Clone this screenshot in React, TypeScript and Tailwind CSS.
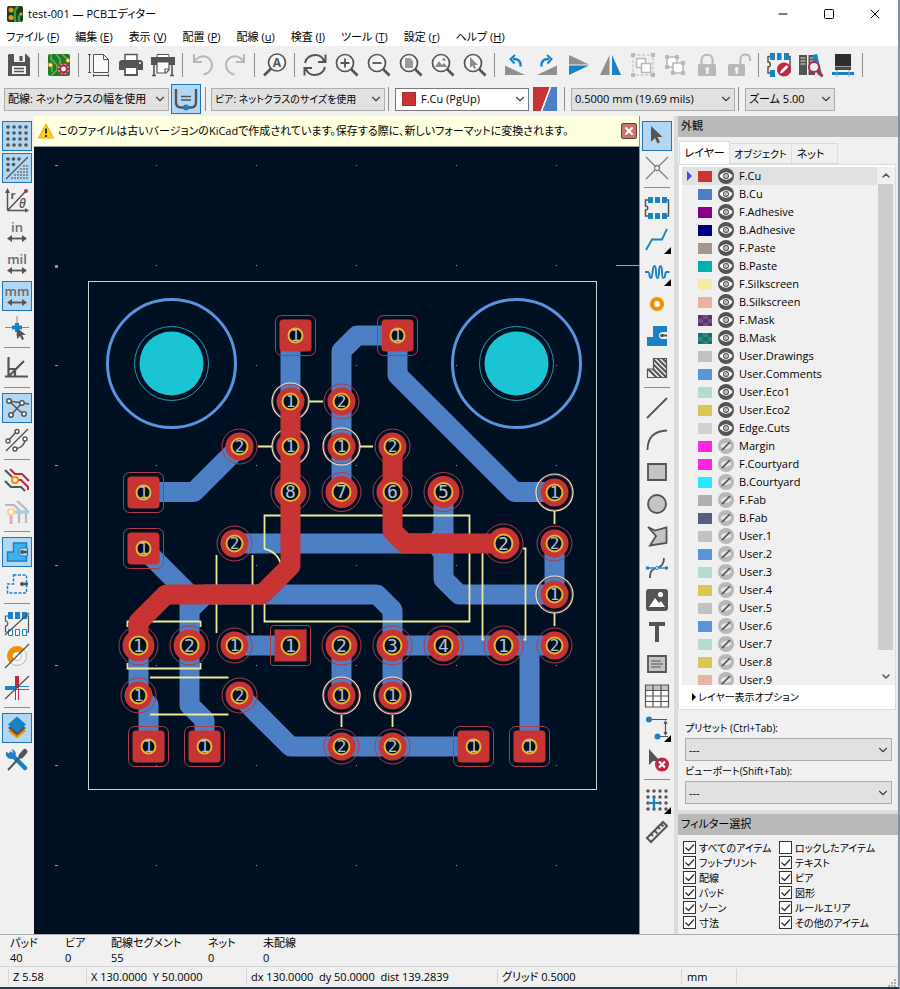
import { useState } from 'react'
import type { ReactNode } from 'react'
import { ChevronDown, ChevronUp, Minus, Square, X } from 'lucide-react'
import clsx from 'clsx'

const D = '#545454'
const B = '#1a81c4'
const R = '#bf2641'
const O = '#f29100'
const G = '#b8b8b8'

const dots = (xs: number[], ys: number[], r: number, fill: string) =>
    xs.flatMap((x) => ys.map((y) => <circle key={`${x}-${y}`} cx={x} cy={y} r={r} fill={fill} />))

const lens = (
    <>
        <circle cx="10" cy="10" r="8.5" fill="#f6f6f6" stroke={D} strokeWidth="1.7" />
        <path d="M16 16l6.5 6.5" stroke={D} strokeWidth="2.6" />
    </>
)

const arrowCursor = 'M7 3v16l4-4 2.500 5.500 2.500-1.200-2.500-5.300h5z'

// all the glyphs are drawn on a 24x24 grid
const icons: Record<string, ReactNode> = {
    save: (
        <>
            <path d="M2 1h17l4 4v18H1V2z" fill={D} />
            <path d="M7 1h11v8H7zM5 13h14v8H5z" fill="#f0f0f0" />
            <path d="M12.500 3h3v5h-3z" fill={D} />
            <path d="M7 15.500h10M7 18.500h10" stroke={D} strokeWidth="1.5" />
        </>
    ),
    board: (
        <>
            <rect x="1" y="1" width="22" height="22" rx="2" fill="#1d7a35" />
            <path d="M4 1v5l6 6v5l-6 6M9 1l4 5v6M15 1l6 6M1 10l4 4v5" stroke="#6cb52d" strokeWidth="1.6" fill="none" />
            <circle cx="3.500" cy="12" r="2" fill="#fff3c4" stroke={O} />
            <circle cx="21" cy="7.500" r="1.800" fill="#fff3c4" stroke={O} />
            <circle cx="16.500" cy="16" r="5" fill={R} stroke="#f8e9ec" strokeWidth="1" />
            <path d="M16.500 9.500v13M10 16h13M12 11.500l9 9M21 11.500l-9 9" stroke={R} strokeWidth="2.200" />
            <circle cx="16.500" cy="16" r="2.400" fill="#f5f5f5" />
        </>
    ),
    page: (
        <>
            <path d="M6.500 1.500h10l5 5v13h-15z" fill="#fafafa" stroke={D} />
            <path d="M16.500 1.500v5h5M2.500 1v19M1 1.500h3M1 19.500h3M6.500 21v3M21.500 21v3M6.500 22.500h15" fill="none" stroke={D} />
        </>
    ),
    print: (
        <>
            <path d="M6 8V1.500h12V8" fill="#fff" stroke={D} strokeWidth="1.4" />
            <path d="M2 7h20l2 2v8h-5v-4H5v4H0V9z" fill={D} />
            <path d="M6 14h12v8H6z" fill="#fff" stroke={D} strokeWidth="1.8" />
            <circle cx="21" cy="10" r="1" fill="#fff" />
        </>
    ),
    plot: (
        <>
            <path d="M6 5V1.500h12V5" fill="#fff" stroke={D} />
            <path d="M0 4h24v8H0z" fill={D} />
            <path d="M3 12v10M21 12v10M1 22.500h4M19 22.500h4" stroke={D} strokeWidth="1.600" />
            <path d="M6 9h12v8l-3 3H6z" fill="#fff" stroke={D} strokeWidth="1.200" />
            <path d="M14 20v-4h4" fill="none" stroke={D} strokeWidth="1.200" />
        </>
    ),
    undo: <path d="M3 1v8h8M3.500 8.500C7 3 14 1.500 18.500 6c5 5 2 14-6 15.500" fill="none" stroke={G} strokeWidth="2" />,
    redo: <path d="M21 1v8h-8M20.500 8.500C17 3 10 1.500 5.500 6c-5 5-2 14 6 15.500" fill="none" stroke={G} strokeWidth="2" />,
    find: (
        <>
            <circle cx="14" cy="9.500" r="8.500" fill="#f6f6f6" stroke={D} strokeWidth="1.7" />
            <path d="M8 15.500L1 22.500" stroke={D} strokeWidth="2.600" />
            <text x="14" y="14" fontSize="12" fontWeight="700" textAnchor="middle" fill={D}>A</text>
        </>
    ),
    refresh: (
        <path
            d="M2 10C3 4.500 8 2 12.500 2c4 0 7 2 8.500 6M22.500 1.500V9H15M22 14c-1 5.500-6 8-10.500 8-4 0-7-2-8.500-6M1.500 22.500V15H9"
            fill="none" stroke={D} strokeWidth="2"
        />
    ),
    zoomIn: <>{lens}<path d="M5.500 10h9M10 5.500v9" stroke={D} strokeWidth="1.800" /></>,
    zoomOut: <>{lens}<path d="M5.500 10h9" stroke={D} strokeWidth="1.800" /></>,
    zoomPage: <>{lens}<path d="M6 5h5l3 3v7H6z" fill="#9a9a9a" /></>,
    zoomObj: <>{lens}<path d="M4 14l4-6 3 4 2-2 3.500 4z" fill="#8a8a8a" /><circle cx="13" cy="6.500" r="1.500" fill="#8a8a8a" /></>,
    zoomSel: <>{lens}<path d="M7 4v11l2.500-2.500 1.500 3.500 2-1-1.500-3h3.500z" fill="#8a8a8a" /></>,
    rotL: (
        <>
            <path d="M2 12.500L22 22H2z" fill="#8f8f8f" />
            <path d="M17.500 13.500c.5-5-2.500-8-7.500-7.500" fill="none" stroke={B} strokeWidth="2.400" />
            <path d="M12 2L7.500 6l4 4.500" fill="none" stroke={B} strokeWidth="2" />
        </>
    ),
    rotR: (
        <>
            <path d="M22 12.500L2 22h20z" fill="#8f8f8f" />
            <path d="M6.500 13.500c-.5-5 2.500-8 7.500-7.500" fill="none" stroke={B} strokeWidth="2.400" />
            <path d="M12 2l4.500 4-4 4.500" fill="none" stroke={B} strokeWidth="2" />
        </>
    ),
    flipV: <><path d="M2 2l20 9.500H2z" fill="#8f8f8f" /><path d="M2 22l20-9.500H2z" fill={B} /></>,
    flipH: <><path d="M10.500 2v20H1z" fill="#8f8f8f" /><path d="M13 2v20h9z" fill={B} /></>,
    group: (
        <g stroke={G} fill="none">
            <path d="M2 2h20v20H2z" strokeDasharray="3 1.500" />
            <path d="M5.500 5.500h9v9h-9z" fill="#fff" strokeWidth="1.500" />
            <path d="M10.500 10.500h9v9h-9z" fill="#fff" strokeWidth="1.500" />
            <path d="M0 0h4v4H0zM20 0h4v4h-4zM0 20h4v4H0zM20 20h4v4h-4z" fill={G} stroke="none" />
        </g>
    ),
    ungroup: (
        <g stroke={G} fill="none">
            <path d="M4 4h10v10H4z" fill="#fff" strokeWidth="1.500" />
            <path d="M10 10h10v10H10z" fill="#fff" strokeWidth="1.500" />
            <path d="M2 2h4v4H2zM12 2h4v4h-4zM2 12h4v4H2zM8 18h4v4H8zM18 18h4v4h-4zM18 8h4v4h-4z" fill={G} stroke="none" />
        </g>
    ),
    lock: (
        <>
            <path d="M6.500 11V7c0-7 11-7 11 0v4" fill="none" stroke={G} strokeWidth="2.200" />
            <rect x="3" y="11" width="18" height="12" rx="1.500" fill={G} />
            <path d="M11 16h2.500v5H11z" fill="#f0f0f0" /><circle cx="12.200" cy="16" r="2" fill="#f0f0f0" />
        </>
    ),
    unlock: (
        <>
            <path d="M13.500 11V6c0-6 9.500-6 9.500 0v2" fill="none" stroke={G} strokeWidth="2" />
            <rect x="1" y="11" width="17" height="12" rx="1.500" fill={G} />
            <path d="M8.500 16H11v5H8.500z" fill="#f0f0f0" /><circle cx="9.700" cy="16" r="2" fill="#f0f0f0" />
        </>
    ),
    fpEdit: (
        <>
            <path d="M4 3.500H1V9c3 0 3 5 0 5v6h3M20 3.500h3V20" fill="none" stroke={D} strokeWidth="1.500" />
            <path d="M3 0h5v7H3zM10 0h4.500v7H10zM17 0h5v7h-5zM3 17h5v7H3z" fill={B} />
            <circle cx="17" cy="16.500" r="7" fill={R} />
            <path d="M13 20.500l1-3 5.500-5.500 2 2-5.500 5.500z" fill="#fff" />
        </>
    ),
    fpBrowse: (
        <>
            <path d="M0 2h8v20H0zM9.500 2H16v20H9.500z" fill={D} />
            <path d="M1.500 5h5M1.500 8h5M1.500 11h5M11 5h3.500M11 8h3.500" stroke="#ddd" strokeWidth="1.200" />
            <path d="M13 2l5-1 5 20-4 1z" fill={B} />
            <circle cx="15" cy="14" r="5" fill="#dfeefa" stroke={R} strokeWidth="2" />
            <path d="M18.500 18l5 5.500" stroke={R} strokeWidth="3" />
        </>
    ),
    view3d: (
        <>
            <path d="M4 1h16v12H4z" fill="#2d2d2d" />
            <path d="M4 13.500h16v3.500H4z" fill="#4a4a4a" />
            <path d="M1 19h22v3H1z" fill={B} />
            <path d="M6 17v7M18 17v7" stroke="#9ab" />
        </>
    ),
    grid: <>{dots([3, 9, 15, 21], [3, 9, 15, 21], 1.8, D)}</>,
    gridFine: (
        <>
            {dots([3, 8.5, 14], [3], 1.8, D)}{dots([3, 8.5], [8.5], 1.8, D)}{dots([3], [14], 1.8, D)}
            {[18, 15, 12, 9, 6].map((n, i) => (
                <path key={n} d={`M${n} ${10 + i * 3}H23`} stroke="#7d8b98" strokeWidth="2" strokeDasharray="2 1" />
            ))}
            <path d="M1 23L23 1" stroke={D} strokeWidth="1.300" />
        </>
    ),
    polar: (
        <>
            <path d="M2.500 22.500V2M2.500 22.500H23M3 22L20 4" fill="none" stroke={D} strokeWidth="1.500" />
            <path d="M0 5l2.500-5L5 5zM20 20l4 2.500-4 2z" fill={D} />
            <circle cx="21" cy="3" r="2" fill={R} />
            <text x="5.500" y="11" fontSize="11" fontWeight="700" fill={D}>r</text>
            <text x="14" y="20" fontSize="12" fontWeight="600" fontStyle="italic" fill={D}>θ</text>
        </>
    ),
    anchor: (
        <>
            <path d="M0 11.500h24M12 0v20" stroke="#888" />
            <path d="M7 11.500h10M12 7v9" stroke={B} strokeWidth="4" />
            <path d="M12 12v11l3-3 2 4 2-1-2-4h4z" fill={D} />
        </>
    ),
    angle: <path d="M3.500 1v20M0 20.500h23M3.500 20.500L19 5M3.500 13h6.500v7" fill="none" stroke={D} strokeWidth="2.200" />,
    ratsnest: (
        <g stroke={D} fill="#fff" strokeWidth="1.500">
            <path d="M4 5l14 13M17 7L6 19M4 5l20 3" fill="none" />
            <circle cx="4" cy="5" r="2.200" /><circle cx="17" cy="7" r="2.200" /><circle cx="6" cy="19" r="2.200" /><circle cx="19" cy="18" r="2.200" />
        </g>
    ),
    ratsCurve: (
        <g stroke={D} fill="#fff" strokeWidth="1.400">
            <path d="M1 23L23 1M3 13L12 3M10 21c6-1 10-4 10-10" fill="none" />
            <circle cx="3" cy="13" r="2" /><circle cx="12" cy="3.500" r="2" /><circle cx="10" cy="21" r="2" /><circle cx="20" cy="11" r="2" />
        </g>
    ),
    highlight: (
        <g fill="none" strokeWidth="2">
            <path d="M0 2l7 7M0 13l6 6h10l4 4" stroke={D} />
            <path d="M5 1l5 5h7l7 7M13 12h3l7 7v3" stroke={R} />
            <circle cx="10" cy="12" r="3" fill="#fff" stroke={O} />
        </g>
    ),
    dimmed: (
        <g fill="none" strokeWidth="2.200">
            <path d="M0 5h9l5 5v13M12 1l9 8v14" stroke={G} />
            <path d="M9 12h15" stroke="#a5cdea" strokeWidth="3.500" />
            <path d="M6 15v9" stroke="#e6a8b2" strokeWidth="3" />
            <circle cx="6" cy="12" r="3" fill="#fff" stroke="#f8d49b" />
        </g>
    ),
    zoneFill: (
        <>
            <path d="M8.500 3h13v18h-19v-9h6z" fill="#41b1ec" stroke={B} strokeWidth="1.500" />
            <path d="M22.500 8h-5a4 4 0 0 0 0 8h5z" fill="#b3d7f3" stroke={B} />
            <path d="M17 12h6" stroke={D} strokeWidth="2.500" /><circle cx="17" cy="12" r="2" fill={D} />
        </>
    ),
    zoneLine: (
        <>
            <path d="M8.500 3h13v18h-19v-9h6z" fill="none" stroke={B} strokeWidth="1.500" strokeDasharray="3 1.500" />
            <path d="M17 12h6" stroke={D} strokeWidth="2.500" /><circle cx="17" cy="12" r="2" fill={D} />
        </>
    ),
    padSketch: (
        <>
            <path d="M3 4H.5v5c3 0 3 5 0 5v6H3M21 4h2.500v16H21" fill="none" stroke={D} strokeWidth="1.200" />
            <path d="M3 0h5v7H3zM10 0h5v7h-5zM17 0h5v7h-5z" fill={B} />
            <path d="M3.500 17.500h4v6h-4zM10.500 17.500h4v6h-4zM17.500 17.500h4v6h-4z" fill="#fff" stroke={B} />
            <path d="M0 23L24 1" stroke={D} strokeWidth="1.300" />
        </>
    ),
    viaSketch: (
        <>
            <circle cx="12" cy="12" r="9.500" fill="#f4f4f4" stroke={G} /><circle cx="12" cy="12" r="4.500" fill="#fff" stroke={G} />
            <path d="M5 19A9.800 9.800 0 0 1 19 5l-4 4a4 4 0 0 0-6 6z" fill={O} />
            <path d="M0 24L24 0" stroke={D} strokeWidth="1.300" />
        </>
    ),
    trackSketch: (
        <>
            <path d="M0 12h12" stroke={B} strokeWidth="4" /><path d="M12 10.500h12M12 13.500h12" stroke={B} />
            <path d="M12 0v12" stroke={R} strokeWidth="4" /><path d="M10.500 12v12M13.500 12v12" stroke={R} />
            <path d="M0 23L24 0" stroke={D} strokeWidth="1.300" />
        </>
    ),
    layers: (
        <>
            <path d="M3 15l9 7.500 9-7.500-9-7z" fill={O} /><path d="M3 12l9 7.500 9-7.500-9-7z" fill={D} /><path d="M3 8.500l9 8 9-8-9-8z" fill={B} />
        </>
    ),
    tools: (
        <>
            <path d="M6 6l14 14" stroke={B} strokeWidth="4.500" strokeLinecap="round" />
            <path d="M1.500 3.500a5 5 0 1 0 5-2.500l2 3.500-3 2.500z" fill={B} />
            <path d="M15 9L3 22" stroke={D} strokeWidth="2" /><path d="M16 8l4-4.500" stroke={D} strokeWidth="5" strokeLinecap="round" />
        </>
    ),
    select: <path d={arrowCursor} fill={D} transform="translate(-1 -1)" />,
    localRats: (
        <g stroke="#808080" strokeWidth="1.300" fill="#fff">
            <path d="M1 1l22 22M23 1L1 23" /><circle cx="12" cy="12" r="2.500" />
        </g>
    ),
    footprint: (
        <>
            <path d="M3 4H.5v6c3 0 3 4 0 4v6H3M21 4h2.500v16H21" fill="none" stroke={D} strokeWidth="1.500" />
            <path d="M3 1h5v6H3zM10 1h5v6h-5zM17 1h5v6h-5zM3 17h5v6H3zM10 17h5v6h-5zM17 17h5v6h-5z" fill={B} />
        </>
    ),
    route: <path d="M1 22l6-10.500h10L22 1" fill="none" stroke={B} strokeWidth="1.800" />,
    tune: <path d="M0 12h3c2 0 1 6 3 6s1-12 3.500-12 .5 12 3 12 .5-12 3-12 .5 12 3 12 1-6 3-6h3" fill="none" stroke={B} strokeWidth="2" />,
    via: <circle cx="12" cy="12" r="5" fill="#fff" stroke={O} strokeWidth="4.200" />,
    zone: (
        <>
            <path d="M8 2h14v20H2v-9h6z" fill={B} />
            <path d="M22 8h-4a4 3.500 0 0 0 0 7h4" fill="#f0f0f0" /><path d="M17 11.500h5" stroke={D} strokeWidth="2" /><circle cx="17" cy="11.500" r="1.800" fill={D} />
        </>
    ),
    keepout: (
        <>
            <clipPath id="hatch"><path d="M8 2h14v20H2v-9h6z" /></clipPath>
            <path clipPath="url(#hatch)" d="M-8 2l20 20M-3 2l20 20M2 2l20 20M7 2l20 20M12 2l20 20M17 2l10 10" stroke={D} strokeWidth="2" />
            <path d="M8.500 2.500h13v19h-19V13h6z" fill="none" stroke={D} strokeWidth="1.200" />
        </>
    ),
    line: <path d="M2 22L22 2" stroke={D} strokeWidth="1.800" />,
    arc: <path d="M2.500 22C2.500 10 9 3 22 2.500" fill="none" stroke={D} strokeWidth="1.800" />,
    rect: <path d="M3 4h18v16H3z" fill="#c4c4c4" stroke={D} strokeWidth="1.800" />,
    circle: <circle cx="12" cy="12" r="9" fill="#c4c4c4" stroke={D} strokeWidth="1.800" />,
    poly: <path d="M3 3l7 3.500 11.500-3V19L5 21.500 11 12z" fill="#c4c4c4" stroke={D} strokeWidth="1.800" />,
    bezier: (
        <>
            <path d="M5 22c0-8 3-9 7-10s7-3 7-10" fill="none" stroke={D} strokeWidth="1.800" />
            <path d="M2 12h20" stroke={B} strokeWidth="1.400" /><path d="M1 10.500h3v3H1zM20 10.500h3v3h-3z" fill={B} />
            <circle cx="12" cy="12" r="1.500" fill="#fff" stroke={B} />
        </>
    ),
    image: (
        <>
            <rect x="1" y="1" width="22" height="22" rx="3" fill={D} /><path d="M4 19l6-9 4 5 2-2 4 6z" fill="#fff" /><circle cx="15.500" cy="6.500" r="2.600" fill="#fff" />
        </>
    ),
    text: <path d="M4 4h16M12 4v18" stroke={D} strokeWidth="4" />,
    textbox: <><path d="M3 4h18v16H3z" fill="#c4c4c4" stroke={D} strokeWidth="1.800" /><path d="M6 9h10M6 12h12M6 15h10" stroke={D} /></>,
    table: (
        <>
            <path d="M.5 1h23v22H.5z" fill="#fff" /><path d="M.5 1h23v5H.5z" fill="#c4c4c4" />
            <path d="M.5 1h23v22H.5zM.5 6.500h23M.5 12h23M.5 17.500h23M8 1v22M16 1v22" fill="none" stroke={D} strokeWidth="1.200" />
        </>
    ),
    dimension: (
        <>
            <path d="M4 3.500h18M12 20.500h11M20.500 5v14" stroke={D} strokeWidth="1.200" />
            <path d="M18.500 8l2-4 2 4zM18.500 16l2 4 2-4z" fill={D} /><circle cx="4" cy="3.500" r="3" fill={B} /><circle cx="12.500" cy="20.500" r="3" fill={B} />
        </>
    ),
    remove: (
        <>
            <path d="M4 1v16l4-4h7z" fill={D} /><circle cx="17" cy="16.500" r="7" fill={R} />
            <path d="M14 13.500l6 6M20 13.500l-6 6" stroke="#fff" strokeWidth="2.200" />
        </>
    ),
    gridOrigin: <>{dots([3, 9, 15, 21], [3, 9, 15, 21], 1.7, D)}<path d="M3 15h12M9 9v12" stroke={B} strokeWidth="2.200" /></>,
    ruler: (
        <path d="M2 18L18 2l4 4L6 22zM6 14l2 2M9.500 10.500l3 3M13 7l2 2M16 4l2.500 2.500" fill="none" stroke={D} strokeWidth="2" />
    ),
    autoWidth: (
        <>
            <path d="M2 2v13c0 4 2 5.500 5 5.500h10c3 0 5-1.500 5-5.500V2" fill="none" stroke={D} strokeWidth="2.400" />
            <path d="M7 9.500h10M7 13h10" stroke={D} strokeWidth="1.400" /><circle cx="12" cy="20.500" r="3" fill={B} />
        </>
    ),
    layerPair: (
        <>
            <path d="M0 0h17L8 24H0z" fill="#c83434" /><path d="M18 0h6v24H9z" fill="#4d7fc4" /><path d="M17.500 0L8.500 24" stroke="#fff" strokeWidth="1.500" />
        </>
    ),
}

// unit buttons carry a caption above a double arrow
for (const unit of ['in', 'mil', 'mm']) {
    icons[unit] = (
        <>
            <text x="12" y="12" fontSize="13" textAnchor="middle" fontWeight="600" fill="#6a6a6a">{unit}</text>
            <path d="M4 18.500h16" stroke={D} strokeWidth="1.800" />
            <path d="M7 15l-5 3.500L7 22zM17 15l5 3.500-5 3.500z" fill={D} />
        </>
    )
}

function Icon({ name }: { name: string }) {
    return <svg viewBox="0 0 24 24" className="size-6 overflow-visible">{icons[name]}</svg>
}

function ToolButton({ name, active, more }: { name: string; active?: boolean; more?: boolean }) {
    return (
        <button
            type="button"
            aria-label={name}
            className={clsx(
                'm-px grid size-[30px] shrink-0 place-items-center border',
                active ? 'border-[#1f75bb] bg-[#b3d7f3]' : 'border-transparent'
            )}
        >
            <span className="col-start-1 row-start-1"><Icon name={name} /></span>
            {more && (
                <svg viewBox="0 0 7 7" className="col-start-1 row-start-1 size-[7px] self-end justify-self-end"><path d="M7 0v7H0z" /></svg>
            )}
        </button>
    )
}

function VSep() {
    return <span className="mx-[3px] h-6 w-px shrink-0 border-l border-[#8c8c8c] box-content" />
}

function HSep() {
    return <span className="my-[3px] h-px w-[26px] shrink-0 border-t border-[#8c8c8c] box-content" />
}

function Combo({ label, value, className, white, swatch }: { label: string; value: string; className?: string; white?: boolean; swatch?: boolean }) {
    return (
        <div
            className={clsx(
                'grid h-[23px] shrink-0 items-center border',
                white ? 'border-[#7a7a7a] bg-white' : 'border-[#adadad] bg-[#e1e1e1]',
                className
            )}
        >
            <select
                aria-label={label}
                className={clsx('col-start-1 row-start-1 h-full w-full appearance-none bg-transparent', swatch ? 'pl-[25px]' : 'pl-[3px]')}
            >
                <option>{value}</option>
            </select>
            {swatch && <span className="pointer-events-none col-start-1 row-start-1 ml-[6px] size-[14px] border border-[#b02c2c] bg-[#c83434]" />}
            <ChevronDown className="pointer-events-none col-start-1 row-start-1 mr-px size-[14px] justify-self-end text-[#444]" strokeWidth={2} />
        </div>
    )
}

const menus = [
    ['ファイル', 'F'], ['編集', 'E'], ['表示', 'V'], ['配置', 'P'], ['配線', 'u'], ['検査', 'I'], ['ツール', 'T'], ['設定', 'r'], ['ヘルプ', 'H'],
]

const topTools = [
    'save', '|', 'board', '|', 'page', 'print', 'plot', '|', 'undo', 'redo', '|', 'find', '|',
    'refresh', 'zoomIn', 'zoomOut', 'zoomPage', 'zoomObj', 'zoomSel', '|',
    'rotL', 'rotR', 'flipV', 'flipH', 'group', 'ungroup', 'lock', 'unlock', '|', 'fpEdit', 'fpBrowse', 'view3d', '|',
]

const leftTools = [
    'grid', 'gridFine', 'polar', 'in', 'mil', 'mm', 'anchor', '|', 'angle', '|', 'ratsnest', 'ratsCurve', '|',
    'highlight', 'dimmed', '|', 'zoneFill', 'zoneLine', '|', 'padSketch', 'viaSketch', 'trackSketch', '|', 'layers', 'tools',
]

const rightTools = [
    'select', 'localRats', '|', 'footprint', 'route', 'tune', 'via', 'zone', 'keepout', '|',
    'line', 'arc', 'rect', 'circle', 'poly', 'bezier', 'image', 'text', 'textbox', 'table', 'dimension', 'remove', '|', 'gridOrigin', 'ruler',
]

const activeTools = ['grid', 'gridFine', 'mm', 'ratsnest', 'zoneFill', 'layers', 'select']
const moreTools = ['route', 'tune', 'dimension', 'gridOrigin']

function SideBar({ tools, label }: { tools: string[]; label: string }) {
    return (
        <div role="toolbar" aria-label={label} className="flex w-[34px] shrink-0 flex-col items-center pt-1">
            {tools.map((t, i) =>
                t === '|' ? <HSep key={i} /> : <ToolButton key={i} name={t} active={activeTools.includes(t)} more={moreTools.includes(t)} />
            )}
        </div>
    )
}

const layers: [string, string, boolean][] = [
    ['F.Cu', '#c83434', true], ['B.Cu', '#4d7fc4', true], ['F.Adhesive', '#840084', true], ['B.Adhesive', '#000084', true],
    ['F.Paste', '#a5958e', true], ['B.Paste', '#00b0ac', true], ['F.Silkscreen', '#f2eda1', true], ['B.Silkscreen', '#e8b2a7', true],
    ['F.Mask', '#5e3070', true], ['B.Mask', '#0f7468', true], ['User.Drawings', '#c2c2c2', true], ['User.Comments', '#5994dc', true],
    ['User.Eco1', '#b4dbd2', true], ['User.Eco2', '#d8c852', true], ['Edge.Cuts', '#d0d2cd', true], ['Margin', '#ff26e2', false],
    ['F.Courtyard', '#ff26e2', false], ['B.Courtyard', '#26e9ff', false], ['F.Fab', '#afafaf', false], ['B.Fab', '#585d84', false],
    ['User.1', '#c2c2c2', false], ['User.2', '#5994dc', false], ['User.3', '#b4dbd2', false], ['User.4', '#d8c852', false],
    ['User.5', '#c2c2c2', false], ['User.6', '#5994dc', false], ['User.7', '#b4dbd2', false], ['User.8', '#d8c852', false], ['User.9', '#e8b2a7', false],
]

function Eye({ on }: { on: boolean }) {
    return on ? (
        <svg viewBox="0 0 16 16" className="size-4">
            <circle cx="8" cy="8" r="8" fill="#545454" />
            <path d="M1.500 8C5 3 11 3 14.500 8 11 13 5 13 1.500 8z" fill="#fff" />
            <circle cx="8" cy="8" r="3" fill="#545454" /><circle cx="8" cy="8" r="1.800" fill="#fff" /><circle cx="8" cy="8" r=".8" fill="#545454" />
        </svg>
    ) : (
        <svg viewBox="0 0 16 16" className="size-4">
            <circle cx="8" cy="8" r="8" fill="#b8b8b8" />
            <path d="M2.500 8C5 4 11 4 13.500 8 11 12 5 12 2.500 8z" fill="#e4e4e4" />
            <path d="M4 12l8-8" stroke="#4a4a4a" strokeWidth="1.600" />
        </svg>
    )
}

function LayerRow({ name, color, on, current }: { name: string; color: string; on: boolean; current: boolean }) {
    return (
        <li className={clsx('flex h-[18px] items-center leading-3', current && 'bg-[#e1e1e1]')}>
            <span className="w-4 shrink-0 pl-[5px]">
                {current && <svg viewBox="0 0 5 10" className="h-[10px] w-[5px]"><path d="M0 0l5 5-5 5z" fill="#4444e8" /></svg>}
            </span>
            <svg viewBox="0 0 14 11" className="h-[11px] w-[14px] shrink-0">
                <path d="M0 0h14v11H0z" fill={color} />
                {name.endsWith('Mask') && <path d="M5 0h5v4H5zM0 4h5v4H0zM10 4h4v4h-4zM5 8h5v3H5z" fill="#fff" opacity=".15" />}
            </svg>
            <button type="button" aria-label={`${name} visibility`} className="ml-[6px] shrink-0"><Eye on={on} /></button>
            <span className="ml-[5px]">{name}</span>
        </li>
    )
}

const filters: [string, boolean][] = [
    ['すべてのアイテム', true], ['ロックしたアイテム', false], ['フットプリント', true], ['テキスト', true], ['配線', true], ['ビア', true],
    ['パッド', true], ['図形', true], ['ゾーン', true], ['ルールエリア', true], ['寸法', true], ['その他のアイテム', true],
]

function FilterBox({ label, on }: { label: string; on: boolean }) {
    const [checked, setChecked] = useState(on)
    return (
        <label className="flex h-[15px] items-center gap-[3px] whitespace-nowrap">
            <span className="grid">
                <input
                    type="checkbox"
                    checked={checked}
                    onChange={() => setChecked(!checked)}
                    className="col-start-1 row-start-1 size-[13px] appearance-none border border-[#333] bg-white"
                />
                {checked && (
                    <svg viewBox="0 0 13 13" className="pointer-events-none col-start-1 row-start-1 size-[13px]">
                        <path d="M2.500 6.500l3 3 5.500-6" fill="none" stroke="#333" strokeWidth="1.300" />
                    </svg>
                )}
            </span>
            {label}
        </label>
    )
}

const backTracks = [
    'M290.500 340V401.500',
    'M397.500 335.500H357L341.500 351V492',
    'M397.500 335.500V375L514.500 492H554.500',
    'M143.500 492H194L239.500 446.500',
    'M234.500 543.500H443.500M436 543.500l7.500-10M436 543.500l7.500 10',
    'M443.500 492V579L459 594.500H554.500V543.500',
    'M143.500 548.500L189.500 594.500V705L204.500 720V746.500',
    'M189.500 610L205 594.500H377L392.500 610V695.500',
    'M138.500 645.500V695.500L148.500 705V746.500',
    'M234.500 645.500H290.500',
    'M392.500 645.500H554.500M529.500 645.500V746.500',
    'M341.500 645.500V695.500',
    'M239.500 695.500L290.500 746.500H473.500',
]

const frontTracks = [
    'M290.500 401.500V566L262 594.500H166L138.500 622V645.500',
    'M392.500 446.500V531L405 543.500H503.500',
]

const silk = [
    'M309 401.500H323M258 446.500H272M360 446.500H373M554.500 511V524M554.500 613V626M341.500 715V727M392.500 715V727',
    'M264.500 549V515.500H469.500V621.500H264.500V588.500M264.500 549A20 20 0 0 1 264.500 588.500',
    'M216.500 555V633M252.500 555V633',
    'M127.500 627V621.500H200.500V627M127.500 663V668.500H200.500V663',
    'M150 677.500H228.500M150 714.500H228.500',
    'M482.500 550V639.500h2M523 548.500h2.500V639.500h-2',
]

type Pad = [number, number, string]

const boxPads: Pad[] = [
    [295.5, 335.5, '1'], [397.5, 335.5, '1'], [143.5, 492.5, '1'], [143.5, 548.5, '1'],
    [148.5, 746.5, '1'], [204.5, 746.5, '1'], [473.5, 746.5, '1'], [529.5, 746.5, '1'],
]
const bigPads: Pad[] = [
    [290.5, 492, '8'], [341.5, 492, '7'], [392.5, 492, '6'], [443.5, 492, '5'], [341.5, 645.5, '2'], [392.5, 645.5, '3'],
    [443.5, 645.5, '4'], [503.5, 645.5, '1'], [503.5, 543.5, '2'], [138.5, 645.5, '1'], [189.5, 645.5, '2'],
]
const smallPads: Pad[] = [
    [239.5, 446.5, '2'], [234.5, 543.5, '2'], [234.5, 645.5, '1'], [138.5, 695.5, '1'], [239.5, 695.5, '2'], [341.5, 401.5, '2'],
    [392.5, 446.5, '2'], [554.5, 543.5, '2'], [554.5, 645.5, '2'], [341.5, 746.5, '2'], [392.5, 746.5, '2'],
]
const ringPads: Pad[] = [
    [290.5, 401.5, '1'], [290.5, 446.5, '1'], [341.5, 446.5, '1'], [554.5, 492.5, '1'], [554.5, 594.5, '1'], [341.5, 695.5, '1'], [392.5, 695.5, '1'],
]

function Hole({ pad: [x, y, n], r, size }: { pad: Pad; r: number; size: number }) {
    return (
        <>
            <circle cx={x} cy={y} r={r} fill="#001023" stroke="#e3b72e" strokeWidth="2" />
            <text x={x} y={y + size * 0.36} fontSize={size} textAnchor="middle" fill="#b9c1cf" className="font-['DejaVu_Sans_Mono',monospace]">{n}</text>
        </>
    )
}

function Board() {
    const cols = [56, 156, 256, 356, 456, 556]
    const rows = [165, 265, 365, 465, 565, 665, 765, 865]
    return (
        <svg viewBox="34 147 605 787" preserveAspectRatio="xMidYMid slice" className="h-full w-full" role="img" aria-label="PCB">
            {rows.map((y) => cols.map((x) => (
                <rect key={`${x}-${y}`} x={x === 56 ? 55 : x} y={y} width={x === 56 ? 3 : 1} height={x === 56 && y === 265 ? 3 : 1} fill="#8a93a0" />
            )))}
            <path d="M616 265.500H639" stroke="#9aa2ac" />
            <rect x="88.500" y="281.500" width="508" height="508" fill="none" stroke="#d0d2cd" />
            {[171.5, 516.5].map((x) => (
                <g key={x}>
                    <circle cx={x} cy="363.500" r="64" fill="none" stroke="#5994dc" strokeWidth="3" />
                    <circle cx={x} cy="363.500" r="37" fill="none" stroke="#18a0ae" strokeWidth="1" />
                    <circle cx={x} cy="363.500" r="32" fill="#1bc4d4" />
                </g>
            ))}
            <g fill="none" stroke="#4d7fc4" strokeWidth="20" strokeLinejoin="round">{backTracks.map((d) => <path key={d} d={d} />)}</g>
            <g fill="none" stroke="#eeea9c" strokeWidth="1.800">{silk.map((d) => <path key={d} d={d} />)}</g>
            <g fill="none" stroke="#b03a48" strokeWidth="1">
                {boxPads.map(([x, y]) => <rect key={`${x}-${y}`} x={x - 20} y={y - 20} width="40" height="40" rx="6" />)}
                {bigPads.map(([x, y]) => <circle key={`${x}-${y}`} cx={x} cy={y} r="19.500" />)}
                {smallPads.map(([x, y]) => <circle key={`${x}-${y}`} cx={x} cy={y} r="17.500" />)}
                {ringPads.map(([x, y]) => <circle key={`${x}-${y}`} cx={x} cy={y} r="17.500" />)}
                <rect x="270.500" y="625.500" width="40" height="40" rx="3" />
            </g>
            <g fill="none" stroke="#f5e6c4" strokeWidth="1.200">
                {ringPads.map(([x, y]) => <circle key={`${x}-${y}`} cx={x} cy={y} r="18.500" />)}
            </g>
            <g fill="none" stroke="#c83434" strokeWidth="20" strokeLinejoin="round">{frontTracks.map((d) => <path key={d} d={d} />)}</g>
            <g fill="#c83434">
                {boxPads.map(([x, y]) => <rect key={`${x}-${y}`} x={x - 16} y={y - 16} width="32" height="32" rx="4" />)}
                {bigPads.map(([x, y]) => <circle key={`${x}-${y}`} cx={x} cy={y} r="16" />)}
                {smallPads.map(([x, y]) => <circle key={`${x}-${y}`} cx={x} cy={y} r="14" />)}
                {ringPads.map(([x, y]) => <circle key={`${x}-${y}`} cx={x} cy={y} r="14" />)}
                <rect x="274.500" y="629.500" width="32" height="32" />
            </g>
            {boxPads.map((p) => <Hole key={`${p[0]}-${p[1]}`} pad={p} r={7} size={15} />)}
            {[...bigPads, [290.5, 645.5, '1'] as Pad].map((p) => <Hole key={`${p[0]}-${p[1]}`} pad={p} r={9} size={18} />)}
            {[...smallPads, ...ringPads].map((p) => <Hole key={`${p[0]}-${p[1]}`} pad={p} r={8} size={16} />)}
        </svg>
    )
}

function AppearancePanel() {
    return (
        <aside className="flex w-[220px] shrink-0 flex-col">
            <h2 className="h-[21px] bg-[#b9b9b9] pl-[3px] leading-5">外観</h2>
            <div role="tablist" className="mt-1 flex h-[23px] items-end pl-px">
                <button role="tab" aria-selected="true" className="h-[23px] w-[51px] border border-b-0 border-[#dcdcdc] bg-white">レイヤー</button>
                <button role="tab" aria-selected="false" className="h-[21px] w-[62px] whitespace-nowrap border border-l-0 border-[#dcdcdc] text-[10px]">オブジェクト</button>
                <button role="tab" aria-selected="false" className="h-[21px] w-[46px] border border-l-0 border-[#dcdcdc] pr-2">ネット</button>
            </div>
            <div className="mr-[2px] flex h-[546px] flex-col border border-[#dcdcdc] bg-white pl-[3px] pt-[2px]">
                <div className="flex h-[518px] bg-[#f0f0f0]">
                    <ul className="flex-1 overflow-hidden">
                        {layers.map(([name, color, on], i) => <LayerRow key={name} name={name} color={color} on={on} current={i === 0} />)}
                    </ul>
                    <div className="ml-px mr-[2px] flex w-[15px] flex-col items-center">
                        <ChevronUp className="h-[17px] w-3 shrink-0 text-[#555]" strokeWidth={3} />
                        <span className="h-[466px] w-full bg-[#cdcdcd]" />
                        <span className="flex-1" />
                        <ChevronDown className="h-[17px] w-3 shrink-0 text-[#555]" strokeWidth={3} />
                    </div>
                </div>
                <button type="button" className="flex flex-1 items-center gap-[2px] pl-[10px] text-[10px]">
                    <svg viewBox="0 0 4 8" className="h-2 w-1"><path d="M0 0l4 4-4 4z" /></svg>
                    レイヤー表示オプション
                </button>
            </div>
            <div className="flex flex-col pl-[7px] pr-[6px] pt-[10px]">
                <span className="h-[18px] text-[10px]">プリセット (Ctrl+Tab):</span>
                <Combo label="プリセット" value="---" />
                <span className="mt-[2px] h-[18px] text-[10px]">ビューポート(Shift+Tab):</span>
                <Combo label="ビューポート" value="---" />
            </div>
            <h2 className="mt-[6px] h-[25px] border-t-4 border-[#dcdcdc] bg-[#b9b9b9] pl-[3px] leading-5">フィルター選択</h2>
            <div className="grid grid-cols-[96px_1fr] pl-[5px] pt-[5px] text-[10px]">
                {filters.map(([label, on]) => <FilterBox key={label} label={label} on={on} />)}
            </div>
        </aside>
    )
}

export default function App() {
    return (
        <div className="flex min-h-screen flex-col border-r-2 border-b-2 border-b-[#23384a] border-r-[#8a9098] bg-[#f0f0f0] font-['Open_Sans','Noto_Sans_CJK_JP',sans-serif] text-[11px] leading-4 text-black [font-feature-settings:'palt']">
            <header className="bg-white">
                <div className="flex h-[27px] items-center pl-[7px]">
                    <svg viewBox="0 0 16 16" className="size-4">
                        <rect width="16" height="16" rx="2" fill="#173f1c" />
                        <path d="M9 16c-3-4 0-6-1-9s2-5 3-7M13 16c-3-4 0-8 2-9" fill="none" stroke="#36a03c" strokeWidth="2.500" />
                        <circle cx="4" cy="4" r="2.500" fill="#f0921e" /><circle cx="4" cy="11.500" r="2.500" fill="#f0921e" /><circle cx="14" cy="8" r="1.500" fill="#f0921e" />
                    </svg>
                    <h1 className="ml-[5px] flex-1">test-001 — PCBエディター</h1>
                    <button aria-label="Minimize" className="grid w-[46px] place-items-center"><Minus className="h-4 w-[14px]" strokeWidth={2} /></button>
                    <button aria-label="Maximize" className="grid w-[46px] place-items-center"><Square className="size-3" strokeWidth={2} /></button>
                    <button aria-label="Close" className="grid w-[46px] place-items-center"><X className="size-4" strokeWidth={1.5} /></button>
                </div>
                <nav className="flex h-[19px] items-center gap-4 pl-[6px]">
                    {menus.map(([name, key]) => <button key={name} type="button">{name} (<u>{key}</u>)</button>)}
                </nav>
            </header>

            <div role="toolbar" className="mt-[3px] flex h-8 items-center pl-[3px]">
                {topTools.map((t, i) => (t === '|' ? <VSep key={i} /> : <ToolButton key={i} name={t} />))}
            </div>

            <div className="mt-[2px] flex h-8 items-center pl-1">
                <Combo label="配線幅" value="配線: ネットクラスの幅を使用" className="mr-px w-[165px]" />
                <ToolButton name="autoWidth" active />
                <VSep />
                <Combo label="ビアサイズ" value="ビア: ネットクラスのサイズを使用" className="ml-px w-[174px] text-[10px]" />
                <VSep />
                <Combo label="レイヤー" value="F.Cu (PgUp)" white swatch className="ml-[2px] w-[134px]" />
                <button type="button" aria-label="レイヤーペア" className="mx-1 shrink-0"><Icon name="layerPair" /></button>
                <VSep />
                <Combo label="グリッド" value="0.5000 mm (19.69 mils)" className="ml-[2px] w-[164px]" />
                <VSep />
                <Combo label="ズーム" value="ズーム 5.00" className="ml-[2px] w-[90px]" />
            </div>

            <div className="mt-px flex flex-1">
                <SideBar tools={leftTools} label="表示" />
                <main className="flex min-w-0 flex-1 flex-col border-r border-[#8c949c]">
                    <div role="alert" className="flex h-[31px] items-center border-b border-[#9a9a9a] bg-[#ffffe1] pl-1 pr-[2px]">
                        <svg viewBox="0 0 16 16" className="size-4 shrink-0">
                            <path d="M8 1l7.500 14H.5z" fill="#ffcf1f" stroke="#e8a90a" /><path d="M8 5.500v5M8 12v2" stroke="#222" strokeWidth="1.800" />
                        </svg>
                        <p className="ml-1 flex-1 whitespace-nowrap">このファイルは古いバージョンのKiCadで作成されています。保存する際に、新しいフォーマットに変換されます。</p>
                        <button type="button" aria-label="閉じる" className="grid size-4 shrink-0 place-items-center rounded-xs border border-[#6b3b38] bg-[#c9766f]">
                            <X className="size-3 text-white" strokeWidth={4} />
                        </button>
                    </div>
                    <div className="min-h-0 flex-1 bg-[#001023]"><Board /></div>
                </main>
                <SideBar tools={rightTools} label="配置" />
                <div className="w-1 shrink-0 bg-[#dcdcdc]" />
                <AppearancePanel />
            </div>

            <dl className="flex h-8 border-t border-[#a9adb2] pl-[10px] leading-[15px]">
                <div className="w-[55px]"><dt>パッド</dt><dd>40</dd></div>
                <div className="w-[46px]"><dt>ビア</dt><dd>0</dd></div>
                <div className="w-[97px]"><dt>配線セグメント</dt><dd>55</dd></div>
                <div className="w-[55px]"><dt>ネット</dt><dd>0</dd></div>
                <div><dt>未配線</dt><dd>0</dd></div>
            </dl>
            <footer className="flex h-[21px] items-center whitespace-pre border-t border-[#d4d4d4] pl-2">
                <span className="w-[78px] border-l border-[#d4d4d4] pl-1">Z 5.58</span>
                <span className="w-[160px] border-l border-[#d4d4d4] pl-1">X 130.0000  Y 50.0000</span>
                <span className="w-[251px] border-l border-[#d4d4d4] pl-1">dx 130.0000  dy 50.0000  dist 139.2839</span>
                <span className="w-[184px] border-l border-[#d4d4d4] pl-1">グリッド 0.5000</span>
                <span className="w-[55px] border-l border-[#d4d4d4] pl-[5px]">mm</span>
                <span className="flex-1 border-l border-[#d4d4d4]">&nbsp;</span>
                <svg viewBox="0 0 8 8" className="mr-[2px] size-2 self-end"><path d="M6 0h2v2H6zM3 3h2v2H3zM6 3h2v2H6zM0 6h2v2H0zM3 6h2v2H3zM6 6h2v2H6z" fill="#b0b0b0" /></svg>
            </footer>
        </div>
    )
}
